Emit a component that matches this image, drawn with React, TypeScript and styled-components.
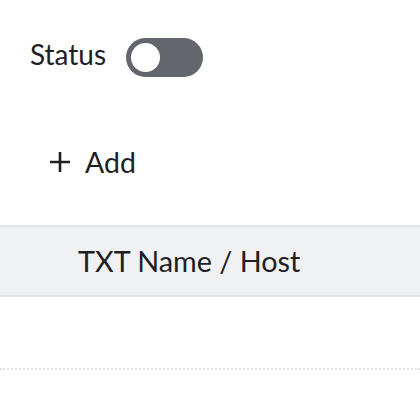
import * as React from "react";
import styled, { createGlobalStyle } from "styled-components";

const GlobalStyle = createGlobalStyle`
    html, body {
        margin: 0;
        padding: 0;
        background: #ffffff;
    }
    body {
        font-family: Lato, "Open Sans", sans-serif;
        color: #1f2023;
    }
`;

const Page = styled.div`
    width: 420px;
    height: 412px;
    overflow: hidden;
    display: flex;
    flex-direction: column;
`;

const StatusRow = styled.div`
    display: flex;
    align-items: center;
    gap: 20px;
    height: 40px;
    margin-top: 37px;
    padding-left: 30px;
`;

const Label = styled.span`
    font-size: 28px;
    line-height: 1;
    padding-bottom: 6px;
`;

const Toggle = styled.button<{ on: boolean }>`
    position: relative;
    width: 77px;
    height: 39px;
    border: none;
    border-radius: 20px;
    padding: 0;
    background: ${p => (p.on ? "#2c7be5" : "#63666d")};
    cursor: pointer;
`;

const Knob = styled.span<{ on: boolean }>`
    position: absolute;
    top: 5px;
    left: ${p => (p.on ? "43px" : "5px")};
    width: 29px;
    height: 29px;
    border-radius: 50%;
    background: #ffffff;
`;

const AddButton = styled.button`
    display: flex;
    align-items: center;
    gap: 14px;
    margin-top: 68px;
    margin-left: 49px;
    padding: 0;
    border: none;
    background: none;
    font-family: Lato, "Open Sans", sans-serif;
    font-size: 28.5px;
    color: #1f2023;
    cursor: pointer;
    align-self: flex-start;
`;

const Table = styled.div`
    margin-top: 46px;
    display: flex;
    flex-direction: column;
`;

const HeaderRow = styled.div`
    display: flex;
    align-items: center;
    height: 68px;
    padding-left: 78px;
    background: #f0f1f3;
    border-top: 2px solid #e3e4e6;
    border-bottom: 2px solid #e3e4e6;
    font-size: 28.8px;
`;

const EmptyRow = styled.div`
    height: 71px;
    border-bottom: 2px dotted #e2e2e2;
`;

export default function App() {
    const [on, setOn] = React.useState(false);
    return (
        <Page>
            <GlobalStyle />
            <StatusRow>
                <Label>Status</Label>
                <Toggle on={on} onClick={() => setOn(!on)}>
                    <Knob on={on} />
                </Toggle>
            </StatusRow>
            <AddButton>
                <svg width="22" height="22" viewBox="0 0 22 22">
                    <path d="M11 1v20M1 11h20" stroke="#1f2023" strokeWidth="2.6" fill="none" />
                </svg>
                Add
            </AddButton>
            <Table>
                <HeaderRow>TXT Name / Host</HeaderRow>
                <EmptyRow />
            </Table>
        </Page>
    );
}
